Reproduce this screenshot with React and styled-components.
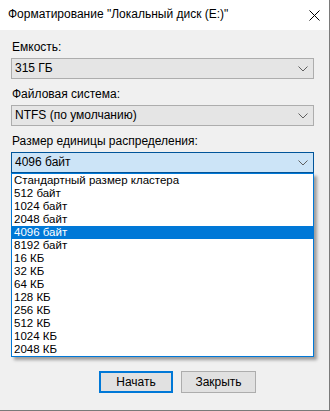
import React from "react";
import styled, { createGlobalStyle } from "styled-components";

const GlobalStyle = createGlobalStyle`
  html, body {
    margin: 0;
    padding: 0;
    background: #f0f0f0;
  }
  body {
    font-family: "Liberation Sans", Arial, sans-serif;
    font-size: 12px;
    color: #000;
  }
`;

const Window = styled.div`
  position: relative;
  width: 330px;
  height: 411px;
  box-sizing: border-box;
  border-right: 1px solid #7a7a7a;
  border-bottom: 1px solid #7a7a7a;
  background: #f0f0f0;
  display: flex;
  flex-direction: column;
`;

const TitleBar = styled.div`
  height: 30px;
  background: #fff;
  display: flex;
  align-items: center;
  justify-content: space-between;
  padding-left: 8px;
  flex-shrink: 0;
`;

const TitleText = styled.div`
  font-size: 12px;
  line-height: 15px;
  margin-top: -1px;
`;

const CloseButton = styled.div`
  width: 30px;
  height: 30px;
  display: flex;
  align-items: center;
  justify-content: center;
`;

const Body = styled.div`
  flex: 1;
  padding: 10px 15px 0 11px;
  display: flex;
  flex-direction: column;
`;

const Label = styled.div`
  height: 15px;
  line-height: 15px;
  margin-bottom: 3px;
  padding-left: 1px;
`;

const Field = styled.div`
  position: relative;
  margin-bottom: ${(p) => p.$gap ?? 8}px;
`;

const Combo = styled.div`
  height: 21px;
  box-sizing: border-box;
  border: 1px solid ${(p) => (p.$active ? "#005499" : "#adadad")};
  background: ${(p) => (p.$active ? "#cce4f7" : "#e5e5e5")};
  display: flex;
  align-items: center;
  justify-content: space-between;
  padding: 0 5px 0 3px;
  line-height: 15px;
`;

const DropList = styled.div`
  position: absolute;
  top: 100%;
  left: 0;
  right: 0;
  z-index: 2;
  background: #fff;
  border: 1px solid #0078d7;
  box-shadow: 3px 3px 3px rgba(0, 0, 0, 0.35);
`;

const Item = styled.div`
  height: 13px;
  line-height: 13px;
  font-size: 11.5px;
  padding-left: 2px;
  background: ${(p) => (p.$selected ? "#0078d7" : "transparent")};
  color: ${(p) => (p.$selected ? "#fff" : "#000")};
  white-space: nowrap;
`;

const HiddenBox = styled.div`
  height: 180px;
  margin-top: 1px;
  border: 1px solid #c9c9c9;
  box-sizing: border-box;
`;

const Buttons = styled.div`
  display: flex;
  gap: 8px;
  padding-left: 88px;
  margin-top: 17px;
`;

const Button = styled.div`
  width: ${(p) => p.$w}px;
  height: 22px;
  box-sizing: border-box;
  background: #e1e1e1;
  border: ${(p) => (p.$focus ? "2px solid #0078d7" : "1px solid #adadad")};
  display: flex;
  align-items: center;
  justify-content: center;
  line-height: 15px;
`;

const Chevron = () => (
  <svg width="10" height="6" viewBox="0 0 10 6">
    <path d="M0.5 0.5 L5 5 L9.5 0.5" fill="none" stroke="#5f5f5f" strokeWidth="1" />
  </svg>
);

const items = [
  "Стандартный размер кластера",
  "512 байт",
  "1024 байт",
  "2048 байт",
  "4096 байт",
  "8192 байт",
  "16 КБ",
  "32 КБ",
  "64 КБ",
  "128 КБ",
  "256 КБ",
  "512 КБ",
  "1024 КБ",
  "2048 КБ",
];

export default function App() {
  return (
    <>
      <GlobalStyle />
      <Window>
        <TitleBar>
          <TitleText>Форматирование "Локальный диск (E:)"</TitleText>
          <CloseButton>
            <svg width="11" height="11" viewBox="0 0 11 11">
              <path d="M0.5 0.5 L10.5 10.5 M10.5 0.5 L0.5 10.5" stroke="#000" strokeWidth="1" />
            </svg>
          </CloseButton>
        </TitleBar>
        <Body>
          <Label>Емкость:</Label>
          <Field>
            <Combo>
              <span>315 ГБ</span>
              <Chevron />
            </Combo>
          </Field>
          <Label>Файловая система:</Label>
          <Field>
            <Combo>
              <span>NTFS (по умолчанию)</span>
              <Chevron />
            </Combo>
          </Field>
          <Label>Размер единицы распределения:</Label>
          <Field $gap={0}>
            <Combo $active>
              <span>4096 байт</span>
              <Chevron />
            </Combo>
            <DropList>
              {items.map((t) => (
                <Item key={t} $selected={t === "4096 байт"}>
                  {t}
                </Item>
              ))}
            </DropList>
          </Field>
          <HiddenBox />
          <Buttons>
            <Button $w={74} $focus>
              Начать
            </Button>
            <Button $w={75}>Закрыть</Button>
          </Buttons>
        </Body>
      </Window>
    </>
  );
}
